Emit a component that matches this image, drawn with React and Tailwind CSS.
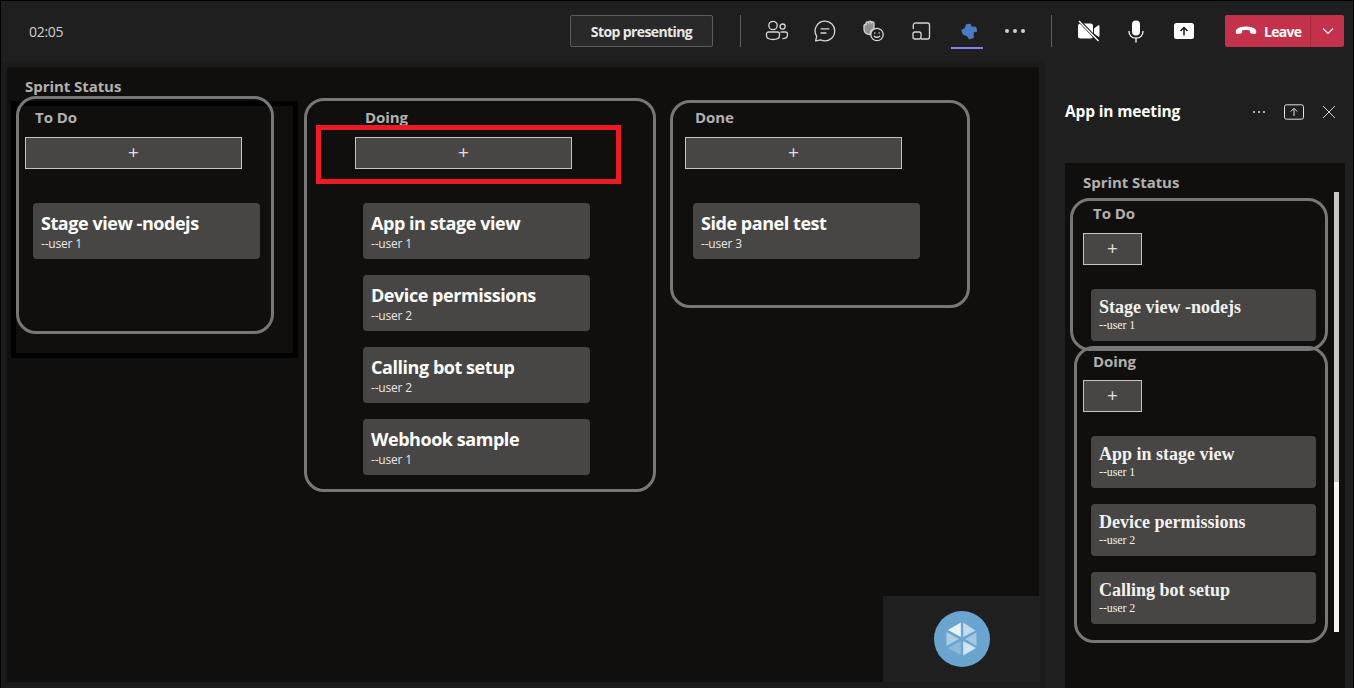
import React from "react";

const SANS = { fontFamily: '"Open Sans", "Noto Sans", sans-serif' };

function People() {
  return (
    <svg width="24" height="24" viewBox="0 0 24 24" fill="none" stroke="#d6d6d6" strokeWidth="1.3">
      <circle cx="8" cy="6.5" r="4.2" />
      <circle cx="17.6" cy="7.6" r="2.6" />
      <path d="M3.5 13h9a2 2 0 0 1 2 2v1.5c0 2.6-2.6 4-6.5 4s-6.5-1.4-6.5-4V15a2 2 0 0 1 2-2z" />
      <path d="M15.5 13h5a2 2 0 0 1 2 2v1c0 2.4-2.2 3.6-5 3.6" />
    </svg>
  );
}
function Chat() {
  return (
    <svg width="24" height="24" viewBox="0 0 24 24" fill="none" stroke="#d6d6d6" strokeWidth="1.3">
      <path d="M12 2.2c5.4 0 9.8 4.3 9.8 9.8s-4.4 9.8-9.8 9.8c-1.6 0-3.1-.4-4.4-1l-5 1.1 1.1-4.6A9.8 9.8 0 0 1 12 2.2z" strokeLinejoin="round" />
      <path d="M8 9.8h8M8 14h5" strokeLinecap="round" />
    </svg>
  );
}
function HandSmile() {
  return (
    <svg width="24" height="24" viewBox="0 0 24 24" fill="none" stroke="#d6d6d6" strokeWidth="1.3">
      <path d="M3 6.500a1.400 1.400 0 0 1 2-.8V4a1.400 1.400 0 0 1 2.600-.5 1.400 1.400 0 0 1 2.800 0 1.400 1.400 0 0 1 2.600.8V10c-2.500.6-3.800 2.600-3.600 5.400C6 16 3 13.500 3 10.500z" fill="#8f8f8f" />
      <circle cx="16" cy="15.500" r="6.200" fill="#1f1f1f" />
      <circle cx="13.800" cy="14" r="0.800" fill="#d6d6d6" stroke="none" />
      <circle cx="18.200" cy="14" r="0.800" fill="#d6d6d6" stroke="none" />
      <path d="M13.300 17.200c1.400 1.400 4 1.400 5.400 0" strokeLinecap="round" />
    </svg>
  );
}
function ShareTray() {
  return (
    <svg width="24" height="24" viewBox="0 0 24 24" fill="none" stroke="#d6d6d6" strokeWidth="1.3">
      <path d="M6.500 4h12a2 2 0 0 1 2 2v12a2 2 0 0 1-2 2H12" />
      <path d="M6.500 4a2.200 2.200 0 0 0-2.200 2.200V10" />
      <rect x="4" y="13" width="8" height="7" rx="2" />
    </svg>
  );
}
function PuzzleIcon() {
  return (
    <svg width="18" height="17" viewBox="0 0 18 17">
      <polygon
        points="2,7.500 5.500,5.500 6.500,2 10,1.500 10.800,4 15.500,4.500 16.500,8 13,9 13,14.500 9.500,15.500 7.500,12.500 3.500,11"
        fill="#4a7bc2"
        stroke="#4a7bc2"
        strokeWidth="1.500"
        strokeLinejoin="round"
      />
    </svg>
  );
}
function Dots() {
  return (
    <svg width="24" height="24" viewBox="0 0 24 24" fill="#cfcfcf">
      <circle cx="4" cy="12" r="2" />
      <circle cx="12" cy="12" r="2" />
      <circle cx="20" cy="12" r="2" />
    </svg>
  );
}
function VideoOff() {
  return (
    <svg width="24" height="24" viewBox="0 0 24 24">
      <path d="M3.500 4.500h10a2.500 2.500 0 0 1 2.500 2.500v10a2.500 2.500 0 0 1-2.500 2.500h-10A2.500 2.500 0 0 1 1 17V7a2.500 2.500 0 0 1 2.500-2.500z" fill="#fff" />
      <path d="M17 9.500l4-3c.7-.5 1.500 0 1.500.8v9.400c0 .8-.8 1.300-1.500.8l-4-3z" fill="#fff" />
      <path d="M2 1.500L21.500 22" stroke="#1f1f1f" strokeWidth="3.200" />
      <path d="M2 2l19.500 20" stroke="#fff" strokeWidth="1.300" />
    </svg>
  );
}
function Mic() {
  return (
    <svg width="24" height="24" viewBox="0 0 24 24" fill="none">
      <rect x="8" y="1.500" width="8" height="15" rx="4" fill="#fff" />
      <path d="M5 12.500c0 4 3 6.700 7 6.700s7-2.700 7-6.700M12 19v4" stroke="#fff" strokeWidth="1.300" strokeLinecap="round" />
    </svg>
  );
}
function ShareSolid() {
  return (
    <svg width="24" height="24" viewBox="0 0 24 24">
      <rect x="2" y="4" width="20" height="16" rx="2.500" fill="#fff" />
      <path d="M12 16.500V8.500M8.500 12L12 8.500l3.500 3.500" stroke="#1a1a1a" strokeWidth="1.500" fill="none" />
    </svg>
  );
}
function HangUp() {
  return (
    <svg width="22" height="12" viewBox="0 0 22 12" fill="#fff">
      <path d="M11 1.500c-4 0-7.600 1.100-9.300 2.700C.8 5 .6 6.200.8 7.600c.1.900.8 1.400 1.600 1.300l3.400-.4c.8-.1 1.300-.7 1.300-1.500V5.400c1.300-.4 2.600-.5 3.900-.5s2.600.1 3.900.5V7c0 .8.5 1.400 1.300 1.500l3.400.4c.8.1 1.500-.4 1.600-1.300.2-1.400 0-2.600-.9-3.400C18.600 2.600 15 1.500 11 1.500z" />
    </svg>
  );
}
function Chevron() {
  return (
    <svg width="12" height="8" viewBox="0 0 12 8" fill="none" stroke="#fff" strokeWidth="1.100">
      <path d="M1 1.500l5 5 5-5" />
    </svg>
  );
}
function PanelShare() {
  return (
    <svg width="20" height="16" viewBox="0 0 20 16" fill="none" stroke="#e0e0e0" strokeWidth="1">
      <rect x="0.500" y="0.800" width="19" height="14.400" rx="2" />
      <path d="M10 12V4.500M6.800 7.500L10 4.300l3.200 3.200" />
    </svg>
  );
}
function CloseX() {
  return (
    <svg width="14" height="14" viewBox="0 0 14 14" fill="none" stroke="#d6d6d6" strokeWidth="1">
      <path d="M1 1l12 12M13 1L1 13" />
    </svg>
  );
}
function Logo() {
  return (
    <svg width="56" height="56" viewBox="0 0 56 56">
      <circle cx="28" cy="28" r="28" fill="#69a5cf" />
      <polygon points="26.800,11.500 26.800,26 14,19" fill="#eaf3fa" />
      <polygon points="29.200,11.500 29.200,26 41.500,19.500" fill="#c3dbec" />
      <polygon points="42.500,21.500 42.500,35 31,28" fill="#a3c8e2" />
      <polygon points="29.200,30 29.200,44.500 42,37" fill="#d2e5f2" />
      <polygon points="26.800,30 26.800,44 14,37" fill="#8dbadb" />
      <polygon points="12.500,21 12.500,35 25,28" fill="#aecde5" />
    </svg>
  );
}

function HBtn({ children, w = "w-[48px]" }) {
  return <div className={`${w} h-[32px] flex items-center justify-center`}>{children}</div>;
}

function AddBtn({ w }) {
  return (
    <div className={`${w} h-[32px] pb-[2px] bg-[#484644] border border-[#c8c6c4] flex items-center justify-center text-[#e0e0e0] text-[19px]`} style={SANS}>
      +
    </div>
  );
}

function StageCard({ title, user }) {
  return (
    <div className="w-[227px] h-[56px] rounded-[4px] bg-[#484644] pl-[8px] pt-[7px] text-white" style={SANS}>
      <div className="text-[18px] leading-[26px] font-bold tracking-[-0.450px]">{title}</div>
      <div className="text-[12px] leading-[15px] text-[#e8e8e8] tracking-[-0.200px]">{user}</div>
    </div>
  );
}

function PanelCard({ title, user }) {
  return (
    <div className="w-[225px] h-[52px] rounded-[4px] bg-[#484644] pl-[8px] pt-[7px] text-[#f2f2f2]" style={{ fontFamily: '"Liberation Serif", serif' }}>
      <div className="text-[18px] leading-[22px] font-bold">{title}</div>
      <div className="text-[12px] leading-[14px] text-[#f0f0f0] tracking-[-0.100px]">{user}</div>
    </div>
  );
}

const titleCls = "text-[15px] leading-[20px] font-bold text-[#b3b0ad] tracking-[-0.060px]";

export default function App() {
  return (
    <div className="w-[1354px] h-[688px] overflow-hidden bg-[#1f1f1f] border-t border-x border-black flex flex-col text-white" style={SANS}>
      <header className="h-[60px] shrink-0 flex items-center pr-[9px] pb-[1px] pt-[1px]">
        <div className="ml-[28px] text-[14px] text-[#d0d0d0] tracking-[-0.300px]">02:05</div>
        <div className="flex-1" />
        <div className="w-[143px] h-[32px] mr-[27px] rounded-[2px] border border-[#5c5c5c] bg-[#292929] flex items-center justify-center text-[14px] font-bold text-[#e8e8e8] tracking-[-0.600px]">
          Stop presenting
        </div>
        <div className="w-px h-[32px] bg-[#5f5f5f] mr-[12px]" />
        <HBtn><People /></HBtn>
        <HBtn><Chat /></HBtn>
        <HBtn><HandSmile /></HBtn>
        <HBtn><ShareTray /></HBtn>
        <div className="relative w-[48px] h-[32px] flex items-center justify-center">
          <PuzzleIcon />
          <div className="absolute left-[6px] right-[10px] top-[32px] h-[2px] bg-[#7f85f5]" />
        </div>
        <HBtn w="w-[44px]"><Dots /></HBtn>
        <div className="w-px h-[32px] bg-[#5f5f5f] ml-[14px] mr-[13px]" />
        <HBtn><VideoOff /></HBtn>
        <HBtn w="w-[46px]"><Mic /></HBtn>
        <HBtn w="w-[49px]"><ShareSolid /></HBtn>
        <div className="ml-[17px] w-[119px] h-[32px] rounded-[2px] bg-[#c4314b] flex items-stretch">
          <div className="w-[86px] flex items-center pl-[10px] gap-[7px] border-r border-[#a82a40]">
            <HangUp />
            <span className="text-[14px] font-bold tracking-[-0.700px]">Leave</span>
          </div>
          <div className="flex-1 flex items-center justify-center"><Chevron /></div>
        </div>
      </header>

      <div className="flex-1 flex min-h-0">
        <div className="w-[1044px] shrink-0 bg-[#1b1b1b] pt-[6px] pl-[6px] pr-[6px] pb-[6px] flex">
          <main className="relative flex-1 bg-[#100f0e]">
            <div className={`pl-[18px] pt-[9px] ${titleCls}`}>Sprint Status</div>
            <div className="absolute left-[4px] top-[34px] w-[287px] h-[257px] border-[5px] border-black" />
            <div className="relative flex items-start ml-[9px]">
              <section className="w-[258px] border-[3px] border-[#777777] rounded-[20px] pt-[8px] pl-[6px] pb-[72px]">
                <div className={`ml-[10px] h-[20px] mb-[10px] ${titleCls}`}>To Do</div>
                <AddBtn w="w-[217px]" />
                <div className="mt-[34px] ml-[8px]">
                  <StageCard title="Stage view -nodejs" user="--user 1" />
                </div>
              </section>
              <section className="relative w-[352px] ml-[30px] mt-[2px] border-[3px] border-[#777777] rounded-[20px] pt-[6px] pl-[48px] pb-[14px]">
                <div className={`ml-[10px] h-[20px] mb-[10px] ${titleCls}`}>Doing</div>
                <AddBtn w="w-[217px]" />
                <div className="mt-[34px] ml-[8px] flex flex-col gap-[16px]">
                  <StageCard title="App in stage view" user="--user 1" />
                  <StageCard title="Device permissions" user="--user 2" />
                  <StageCard title="Calling bot setup" user="--user 2" />
                  <StageCard title="Webhook sample" user="--user 1" />
                </div>
                <div className="absolute left-[9px] top-[24px] w-[305px] h-[59px] border-[5px] border-[#ed1c24]" />
              </section>
              <section className="w-[300px] ml-[14px] mt-[4px] border-[3px] border-[#777777] rounded-[20px] pt-[4px] pl-[12px] pb-[46px]">
                <div className={`ml-[10px] h-[20px] mb-[10px] ${titleCls}`}>Done</div>
                <AddBtn w="w-[217px]" />
                <div className="mt-[34px] ml-[8px]">
                  <StageCard title="Side panel test" user="--user 3" />
                </div>
              </section>
            </div>
            <div className="absolute right-[-1px] bottom-0 w-[157px] h-[86px] bg-[#1f1f1f] flex items-center justify-center">
              <Logo />
            </div>
          </main>
        </div>

        <aside className="flex-1 flex flex-col pl-[20px] pr-[8px] min-w-0">
          <div className="h-[102px] shrink-0 flex items-start pt-[40px]">
            <div className="text-[15.500px] leading-[20px] font-bold text-white tracking-[-0.150px]">App in meeting</div>
            <div className="flex-1" />
            <div className="flex items-center h-[20px] mt-[1px] text-[#e0e0e0]">
              <div className="flex gap-[3px] mr-[19px]">
                <span className="w-[2px] h-[2px] rounded-full bg-[#e0e0e0]" />
                <span className="w-[2px] h-[2px] rounded-full bg-[#e0e0e0]" />
                <span className="w-[2px] h-[2px] rounded-full bg-[#e0e0e0]" />
              </div>
              <PanelShare />
              <div className="ml-[18px] mr-[9px]"><CloseX /></div>
            </div>
          </div>
          <div className="relative flex-1 bg-[#100f0e] min-h-0">
            <div className={`pl-[18px] pt-[9px] h-[35px] ${titleCls}`}>Sprint Status</div>
            <section className="relative ml-[5px] w-[258px] border-[3px] border-[#777777] rounded-[20px] pt-[2px] pl-[10px] pb-[7px]">
              <div className={`ml-[10px] h-[20px] mb-[10px] ${titleCls}`}>To Do</div>
              <AddBtn w="w-[59px]" />
              <div className="mt-[24px] ml-[8px]">
                <PanelCard title="Stage view -nodejs" user="--user 1" />
              </div>
            </section>
            <section className="relative ml-[9px] -mt-[5px] w-[254px] border-[3px] border-[#777777] rounded-[20px] pt-[2px] pl-[6px] pb-[16px]">
              <div className={`ml-[10px] h-[20px] mb-[9px] ${titleCls}`}>Doing</div>
              <AddBtn w="w-[59px]" />
              <div className="mt-[24px] ml-[8px] flex flex-col gap-[16px]">
                <PanelCard title="App in stage view" user="--user 1" />
                <PanelCard title="Device permissions" user="--user 2" />
                <PanelCard title="Calling bot setup" user="--user 2" />
              </div>
            </section>
            <div className="absolute left-[269px] top-[29px] w-[5px] h-[290px] bg-[#c8c8c8]" />
            <div className="absolute left-[269px] top-[319px] w-[5px] h-[150px] bg-[#f5f5f5]" />
          </div>
        </aside>
      </div>
    </div>
  );
}
